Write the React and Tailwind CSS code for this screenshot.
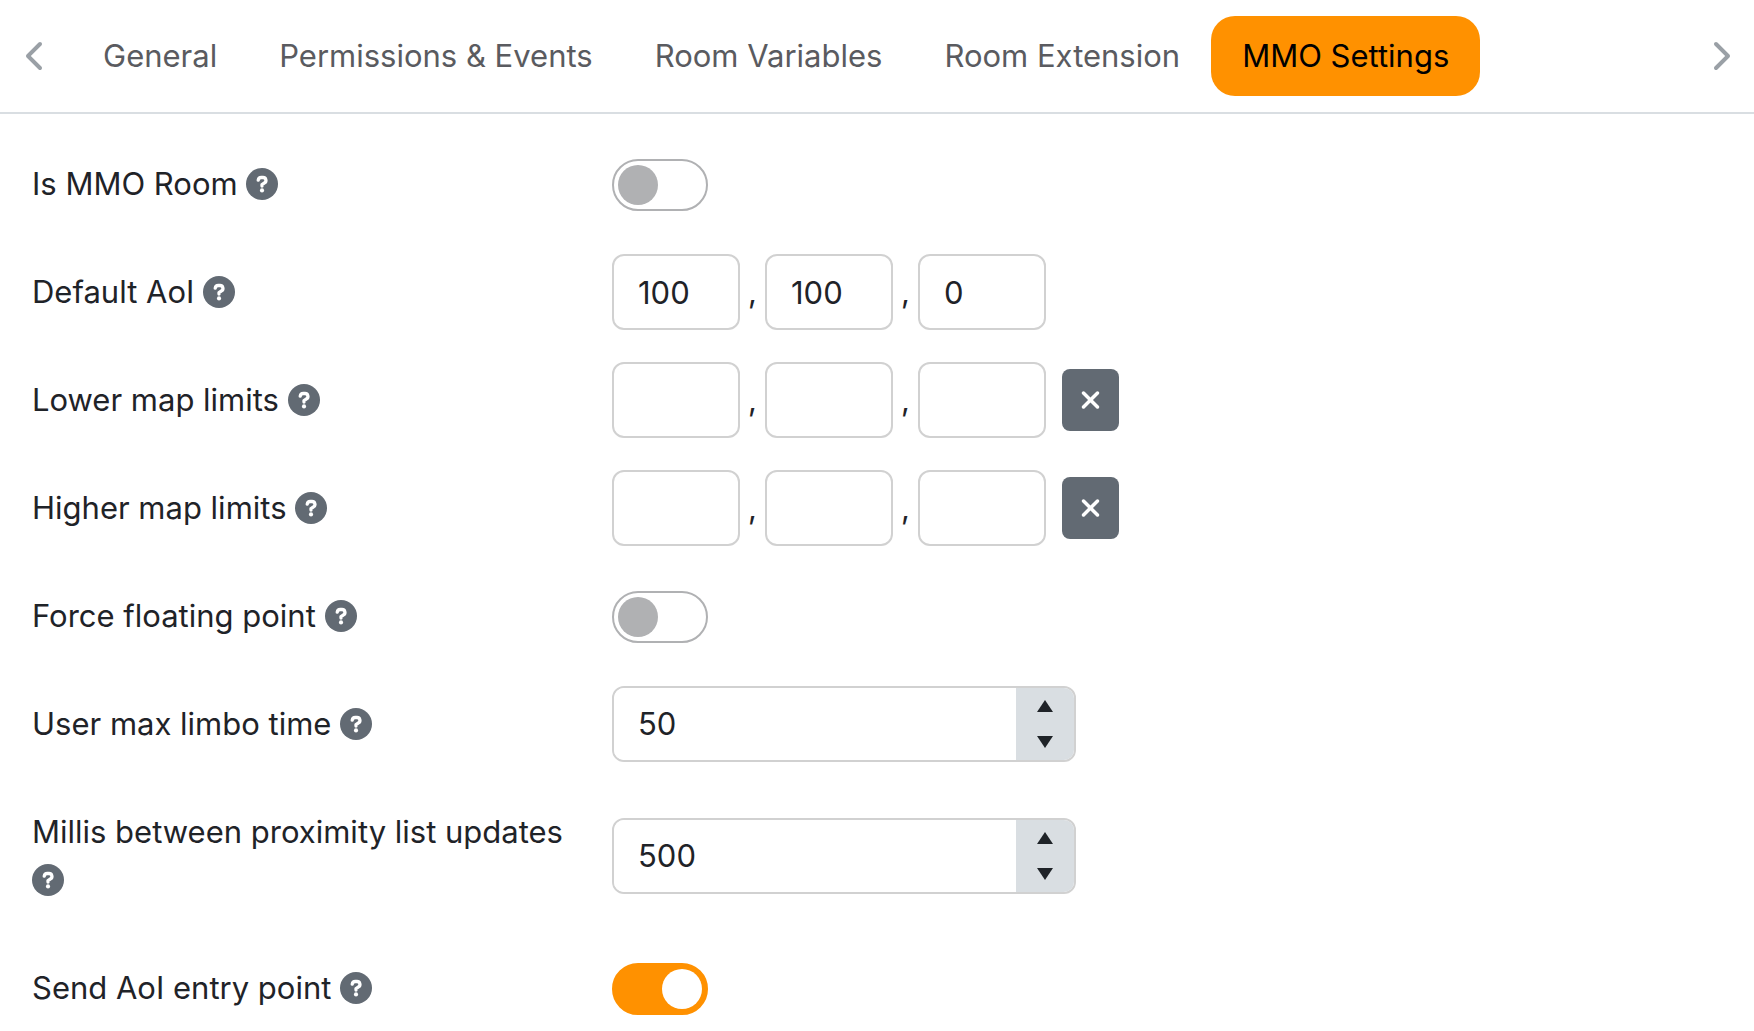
import { useId, useState } from "react";
import { FaChevronLeft, FaChevronRight, FaXmark } from "react-icons/fa6";

const TABS = ["General", "Permissions & Events", "Room Variables", "Room Extension", "MMO Settings"];

function TabBar() {
  const [active, setActive] = useState("MMO Settings");
  return (
    <header className="flex items-center justify-between border-b-2 border-[#d9dee2] py-4">
      <button type="button" aria-label="Scroll tabs left" className="flex h-20 w-[72px] shrink-0 items-center pl-[26px] text-[#9aa0a6]">
        <FaChevronLeft className="h-8 w-5" />
      </button>
      <nav role="tablist" className="flex flex-1 overflow-hidden">
        {TABS.map((tab) => (
          <button
            key={tab}
            type="button"
            role="tab"
            aria-selected={tab === active}
            onClick={() => setActive(tab)}
            className={
              tab === active
                ? "h-20 rounded-3xl bg-[#ff9100] px-[31px] whitespace-nowrap text-black"
                : "h-20 rounded-3xl px-[31px] whitespace-nowrap text-[#5a5b60]"
            }
          >
            {tab}
          </button>
        ))}
      </nav>
      <button type="button" aria-label="Scroll tabs right" className="flex h-20 w-[72px] shrink-0 items-center justify-end pr-6 text-[#9aa0a6]">
        <FaChevronRight className="h-8 w-5" />
      </button>
    </header>
  );
}

function HelpIcon() {
  return (
    <svg viewBox="0 0 32 32" className="h-8 w-8" aria-hidden="true">
      <circle cx="16" cy="16" r="16" fill="#626a73" />
      <path
        d="M12.2 12.2C12.5 10.5 13.7 9.5 15.2 9.5H17a2.9 2.9 0 0 1 1.5 5.4L16 16.6V18"
        fill="none"
        stroke="#fff"
        strokeWidth="3.3"
        strokeLinecap="round"
        strokeLinejoin="round"
      />
      <circle cx="16" cy="22.4" r="2.1" fill="#fff" />
    </svg>
  );
}

function Row({ label, htmlFor, children }) {
  return (
    <div className="grid grid-cols-[548px_minmax(0,1fr)] items-center gap-x-8">
      <div className="py-3.5">
        <label htmlFor={htmlFor}>{label}</label>{" "}
        <button type="button" aria-label={"Help: " + label} className="inline-flex h-8 w-8 align-[-5px]">
          <HelpIcon />
        </button>
      </div>
      <div>{children}</div>
    </div>
  );
}

function ToggleRow({ label, initial }) {
  const id = useId();
  return (
    <Row label={label} htmlFor={id}>
      <div className="flex pt-0.5">
        <input
          id={id}
          type="checkbox"
          role="switch"
          defaultChecked={initial}
          className="flex h-[52px] w-24 appearance-none items-center rounded-full border-2 border-[#b0b1b3] bg-white px-1 before:block before:h-10 before:w-10 before:rounded-full before:bg-[#b0b1b3] checked:justify-end checked:border-[#ff9100] checked:bg-[#ff9100] checked:before:bg-white"
        />
      </div>
    </Row>
  );
}

function VectorRow({ label, initial, clearable }) {
  const id = useId();
  const [values, setValues] = useState(initial);
  const change = (index, value) => setValues(values.map((v, i) => (i === index ? value : v)));
  return (
    <Row label={label} htmlFor={id + "0"}>
      <div className="flex items-center">
        {values.map((value, i) => (
          <div key={i} className="flex items-center">
            {i > 0 && <span className="w-[25px] text-center">,</span>}
            <input
              id={id + i}
              type="text"
              aria-label={i > 0 ? label + " " + "XYZ"[i] : undefined}
              value={value}
              onChange={(e) => change(i, e.target.value)}
              className="h-[76px] w-32 rounded-xl border-2 border-[#d1d1d1] bg-white px-6"
            />
          </div>
        ))}
        {clearable && (
          <button
            type="button"
            aria-label={"Clear " + label}
            onClick={() => setValues(["", "", ""])}
            className="ml-4 flex h-[62px] w-[57px] items-center justify-center rounded-lg bg-[#626a73] text-white"
          >
            <FaXmark className="h-7 w-[21px]" />
          </button>
        )}
      </div>
    </Row>
  );
}

function Triangle({ points }) {
  return (
    <svg viewBox="0 0 16 12" className="h-3 w-4 fill-current" aria-hidden="true">
      <polygon points={points} />
    </svg>
  );
}

function NumberRow({ label, initial }) {
  const id = useId();
  const [value, setValue] = useState(initial);
  return (
    <Row label={label} htmlFor={id}>
      <div className="flex h-[76px] w-full max-w-[464px] overflow-hidden rounded-xl border-2 border-[#d1d1d1]">
        <input
          id={id}
          type="text"
          inputMode="numeric"
          value={value}
          onChange={(e) => setValue(Number(e.target.value) || 0)}
          className="min-w-0 flex-1 bg-white px-6"
        />
        <div className="flex w-[58px] flex-col bg-[#d9dee2]">
          <button type="button" aria-label="Increase" onClick={() => setValue(value + 1)} className="flex flex-1 items-center justify-center">
            <Triangle points="8,0 16,12 0,12" />
          </button>
          <button type="button" aria-label="Decrease" onClick={() => setValue(value - 1)} className="flex flex-1 items-center justify-center">
            <Triangle points="0,0 16,0 8,12" />
          </button>
        </div>
      </div>
    </Row>
  );
}

export default function App() {
  return (
    <div className="min-h-screen bg-white font-['Inter',sans-serif] text-[31px] leading-[48px] text-[#1f2328]">
      <TabBar />
      <form className="flex flex-col gap-8 px-8 pt-8">
        <ToggleRow label="Is MMO Room" initial={false} />
        <VectorRow label="Default AoI" initial={["100", "100", "0"]} />
        <VectorRow label="Lower map limits" initial={["", "", ""]} clearable />
        <VectorRow label="Higher map limits" initial={["", "", ""]} clearable />
        <ToggleRow label="Force floating point" initial={false} />
        <NumberRow label="User max limbo time" initial={50} />
        <NumberRow label="Millis between proximity list updates" initial={500} />
        <ToggleRow label="Send AoI entry point" initial={true} />
      </form>
    </div>
  );
}
